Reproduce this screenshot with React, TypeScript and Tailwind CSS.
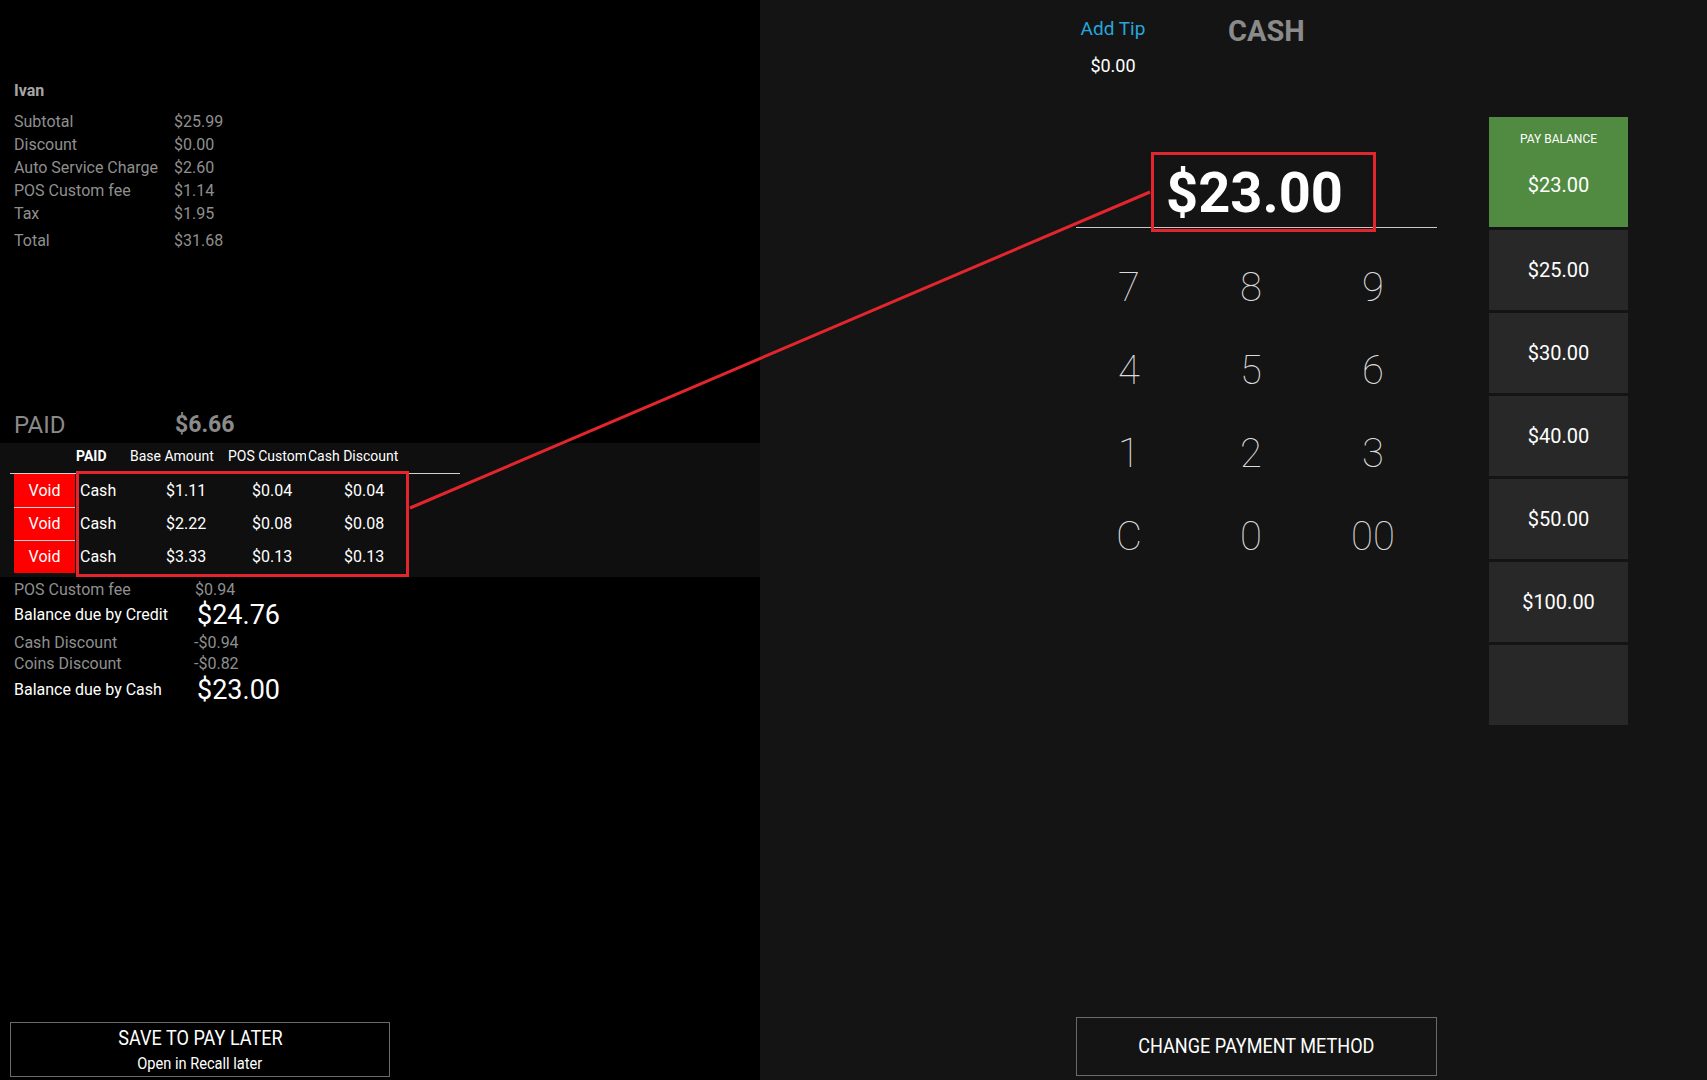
const summary = [
  ["Subtotal", "$25.99"],
  ["Discount", "$0.00"],
  ["Auto Service Charge", "$2.60"],
  ["POS Custom fee", "$1.14"],
  ["Tax", "$1.95"],
]

const payments = [
  ["Cash", "$1.11", "$0.04", "$0.04"],
  ["Cash", "$2.22", "$0.08", "$0.08"],
  ["Cash", "$3.33", "$0.13", "$0.13"],
]

const keys = ["7", "8", "9", "4", "5", "6", "1", "2", "3", "C", "0", "00"]

const quickAmounts = ["$25.00", "$30.00", "$40.00", "$50.00", "$100.00", ""]

export default function App() {
  return (
    <div className="relative flex h-[1080px] w-full overflow-hidden font-['Roboto',sans-serif]">
      {/* Left: order summary */}
      <div className="flex w-[760px] shrink-0 flex-col bg-black">
        <div className="px-[14px] pt-[81px]">
          <div className="text-[16px] font-bold leading-[20px] text-[#a6a6a6]">Ivan</div>
          <div className="mt-[9px] text-[16px] leading-[23px] text-[#8f8f8f]">
            {summary.map(([label, value]) => (
              <div key={label} className="flex">
                <span className="w-[160px]">{label}</span>
                <span>{value}</span>
              </div>
            ))}
            <div className="mt-[4px] flex">
              <span className="w-[160px]">Total</span>
              <span>$31.68</span>
            </div>
          </div>

          <div className="mt-[158px] flex h-[30px] items-center text-[24px] leading-[30px] text-[#8a8a8a]">
            <span className="w-[161px]">PAID</span>
            <span className="text-[23px] font-bold">$6.66</span>
          </div>
        </div>

        {/* Paid table */}
        <div className="mt-[3px] h-[134px] bg-[#0f0f0f]">
          <div className="ml-[10px] flex h-[31px] w-[450px] border-b border-[#d0d0d0] pt-[5px] text-[14px] leading-[16px] text-white">
            <span className="w-[66px]" />
            <span className="w-[54px] font-bold">PAID</span>
            <span className="w-[98px]">Base Amount</span>
            <span className="w-[78px] overflow-hidden whitespace-nowrap">POS Custom fee</span>
            <span className="ml-[2px] whitespace-nowrap">Cash Discount</span>
          </div>
          <div className="ml-[14px]">
            {payments.map((row, i) => (
              <div key={i} className="flex h-[33px] items-center text-[16px] text-white">
                <div
                  className={
                    i === 0
                      ? "flex h-[33px] w-[61px] items-center justify-center bg-[#ff0000] text-[16px]"
                      : "flex h-[33px] w-[61px] items-center justify-center border-t border-[#d6d6d6] bg-[#ff0000] text-[16px]"
                  }
                >
                  Void
                </div>
                <span className="w-[55px] pl-[5px]">{row[0]}</span>
                <span className="w-[98px] pl-[36px]">{row[1]}</span>
                <span className="w-[80px] pl-[24px]">{row[2]}</span>
                <span className="pl-[36px]">{row[3]}</span>
              </div>
            ))}
          </div>
        </div>

        {/* Balances */}
        <div className="px-[14px] pt-[3px]">
          <div className="flex text-[16px] leading-[20px] text-[#8f8f8f]">
            <span className="w-[181px]">POS Custom fee</span>
            <span>$0.94</span>
          </div>
          <div className="flex h-[30px] items-center text-white">
            <span className="w-[183px] text-[16px]">Balance due by Credit</span>
            <span className="text-[27px]">$24.76</span>
          </div>
          <div className="mt-[2px] text-[16px] leading-[21px] text-[#8f8f8f]">
            <div className="flex">
              <span className="w-[180px]">Cash Discount</span>
              <span>-$0.94</span>
            </div>
            <div className="flex">
              <span className="w-[180px]">Coins Discount</span>
              <span>-$0.82</span>
            </div>
          </div>
          <div className="mt-[1px] flex h-[30px] items-center text-white">
            <span className="w-[183px] text-[16px]">Balance due by Cash</span>
            <span className="text-[27px]">$23.00</span>
          </div>
        </div>

        <button className="mb-[3px] ml-[10px] mt-auto flex h-[55px] w-[380px] flex-col items-center justify-center border border-[#6b6b6b] bg-black text-white">
          <span className="inline-block scale-x-[0.86] text-[21px] leading-[24px]">SAVE TO PAY LATER</span>
          <span className="mt-[2px] inline-block scale-x-[0.86] text-[17px] leading-[22px]">Open in Recall later</span>
        </button>
      </div>

      {/* Right: cash payment */}
      <div className="flex flex-1 bg-[#141414]">
        <div className="ml-[316px] flex w-[361px] flex-col">
          <div className="flex items-start">
            <div className="flex w-[74px] flex-col items-center pt-[17px]">
              <span className="whitespace-nowrap text-[19px] leading-[24px] text-[#27a6dc]">Add Tip</span>
              <span className="mt-[13px] text-[18px] leading-[24px] text-white">$0.00</span>
            </div>
            <span className="ml-[78px] pt-[14px] text-[29px] font-bold leading-[34px] text-[#8a8a8a]">CASH</span>
          </div>

          <div className="-ml-[4px] mt-[83px] text-center text-[56px] font-bold leading-[64px] text-white">$23.00</div>
          <div className="mt-[2px] h-px bg-[#c8c8c8]" />

          <div className="-ml-[8px] mt-[18px] grid w-[366px] grid-cols-3">
            {keys.map((k) => (
              <div key={k} className="flex h-[83px] items-center justify-center text-[40px] font-thin text-[#dcdcdc]">
                {k}
              </div>
            ))}
          </div>

          <button className="mb-[4px] mt-auto flex h-[59px] w-full items-center justify-center border border-[#6b6b6b] text-white">
            <span className="inline-block scale-x-[0.86] whitespace-nowrap text-[21px]">CHANGE PAYMENT METHOD</span>
          </button>
        </div>

        <div className="ml-[52px] flex w-[139px] flex-col pt-[117px]">
          <div className="flex h-[110px] flex-col items-center bg-[#508b41] text-white">
            <span className="mt-[14px] text-[12px] leading-[16px]">PAY BALANCE</span>
            <span className="mt-[26px] text-[20px] leading-[24px]">$23.00</span>
          </div>
          {quickAmounts.map((a, i) => (
            <div key={i} className="mt-[3px] flex h-[80px] items-center justify-center bg-[#282828] text-[20px] text-white">
              {a}
            </div>
          ))}
        </div>
      </div>

      {/* Annotation overlay */}
      <svg className="pointer-events-none absolute inset-0 h-[1080px] w-[1707px]" viewBox="0 0 1707 1080">
        <rect x="77.5" y="472.5" width="330" height="103" fill="none" stroke="#e3262d" strokeWidth="3" />
        <rect x="1152.5" y="153.5" width="222" height="77" fill="none" stroke="#e3262d" strokeWidth="3" />
        <line x1="410" y1="508" x2="1150" y2="192" stroke="#e3262d" strokeWidth="3" />
      </svg>
    </div>
  )
}
